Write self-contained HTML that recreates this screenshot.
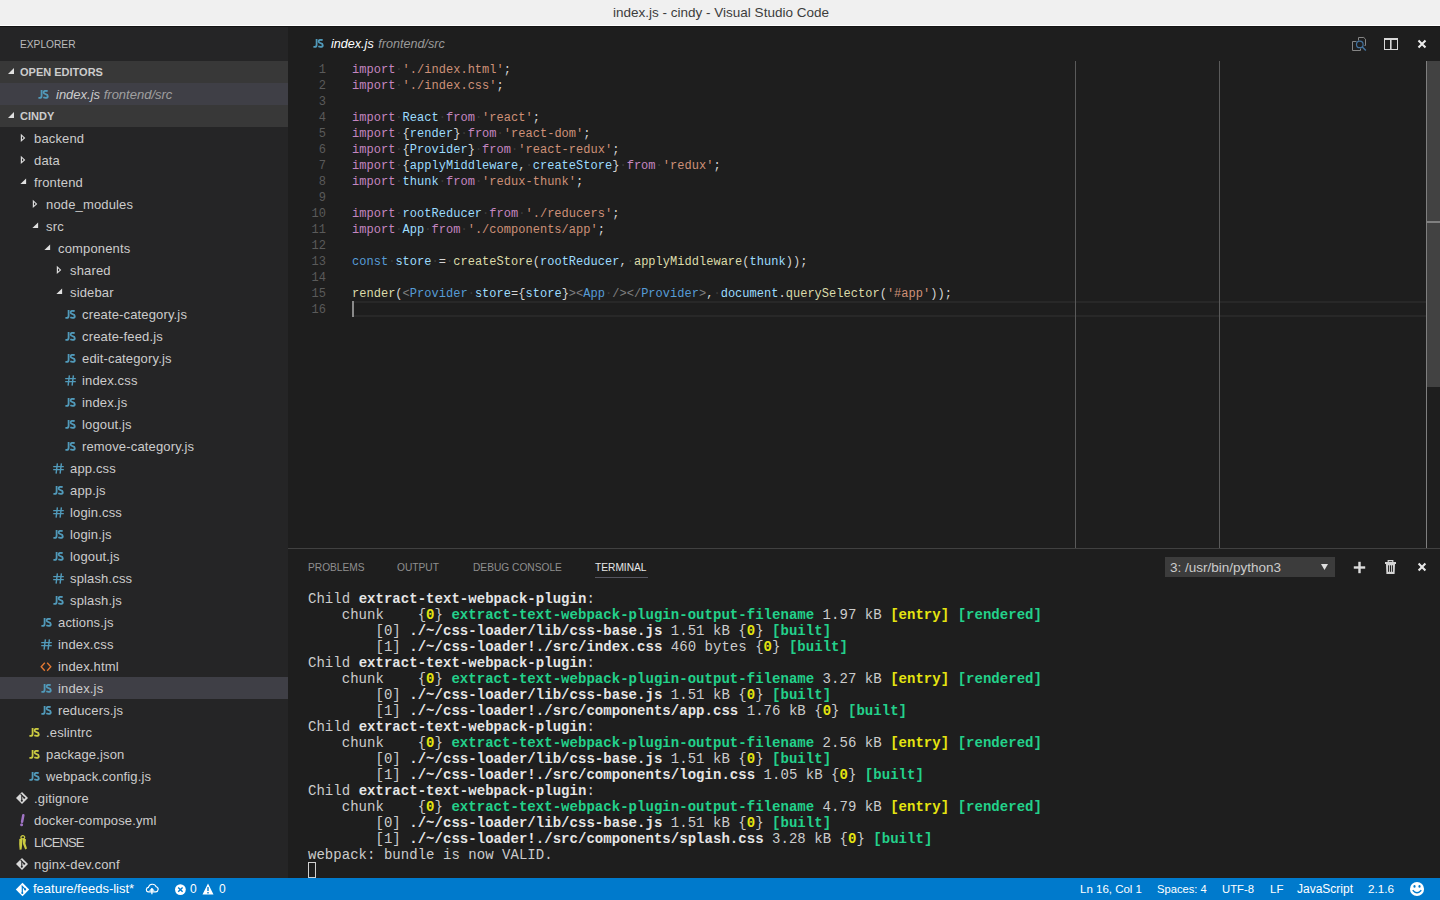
<!DOCTYPE html>
<html><head><meta charset="utf-8"><style>
*{margin:0;padding:0;box-sizing:border-box}
html,body{width:1440px;height:900px;overflow:hidden;background:#1e1e1e}
body{position:relative;font-family:"Liberation Sans",sans-serif}
.abs{position:absolute}
#title{position:absolute;left:0;top:0;width:1440px;height:25px;background:#f0f0f0}
#title .tx{position:absolute;left:1px;width:1440px;top:5px;text-align:center;font-size:13.5px;color:#3c3c3c;line-height:16px}
#tl1{position:absolute;left:0;top:25px;width:1440px;height:1px;background:#ffffff}
#tl2{position:absolute;left:0;top:26px;width:1440px;height:1px;background:#141414}
#side{position:absolute;left:0;top:27px;width:288px;height:851px;background:#252526;overflow:hidden}
#side .hdr{position:absolute;left:0;width:288px;height:22px;background:#383838}
#side .htx{position:absolute;left:20px;font-size:11px;font-weight:bold;color:#cccccc;line-height:22px}
.sel{position:absolute;left:0;width:288px;height:22px;background:#3f3f46}
.ti{position:absolute;font-size:13px;color:#cccccc;line-height:22px;white-space:pre;padding-top:0.5px;letter-spacing:0.15px}
.ic{position:absolute}
.jsic{position:absolute;font-size:10px;font-weight:bold;line-height:22px;letter-spacing:-0.5px}
.hashic{position:absolute;font-size:13px;font-weight:bold;line-height:22px;color:#519aba}
.ymlic{position:absolute;left:0;font-size:14px;font-weight:bold;font-style:italic;line-height:22px;color:#a074c4}
#editor{position:absolute;left:288px;top:27px;width:1152px;height:851px;background:#1e1e1e}
.ln{position:absolute;left:288px;width:38px;text-align:right;font-family:"Liberation Mono",monospace;font-size:12px;line-height:16px;color:#5a5a5a;height:16px}
.cl{position:absolute;left:352px;font-family:"Liberation Mono",monospace;font-size:12px;letter-spacing:0.025px;line-height:16px;white-space:pre;height:16px}
.ws{color:#3b3b3b}
.tl{position:absolute;left:308px;font-family:"Liberation Mono",monospace;font-size:14px;letter-spacing:0.035px;line-height:16px;white-space:pre;color:#cccccc;height:16px}
.tl .b{font-weight:bold;color:#e5e5e5}
.tl .by{font-weight:bold;color:#e5e510}
.tl .bg{font-weight:bold;color:#23d18b}
.tl .g{font-weight:bold;color:#23d18b}
#status{position:absolute;left:0;top:878px;width:1440px;height:22px;background:#007acc;color:#ffffff;font-size:12px}
#status .it{position:absolute;top:0;line-height:22px;white-space:pre}
.ptab{position:absolute;top:560px;font-size:10.2px;line-height:16px;color:#8f8f8f}
</style></head><body>
<div id="title"><div class="tx">index.js - cindy - Visual Studio Code</div></div>
<div id="tl1"></div><div id="tl2"></div>
<div id="editor"></div>

<div id="side">
 <div class="abs" style="left:20px;top:10px;font-size:10.2px;color:#bbbbbb;line-height:16px">EXPLORER</div>
 <div class="hdr" style="top:34px"></div>
 <svg class="ic" style="left:8px;top:41px" width="8" height="8"><path d="M0 6 L6 6 L6 0 Z" fill="#e0e0e0"/></svg>
 <div class="htx" style="top:34px">OPEN EDITORS</div>
 <div class="sel" style="top:56px"></div>
 <svg class="ic" style="left:38px;top:63px" width="13" height="11"><path d="M3.6 0 V5.9 Q3.6 7.9 1.6 7.9 H0.4" fill="none" stroke="#519aba" stroke-width="1.8"/><path d="M9.7 1.3 Q8.7 0.8 7.7 0.8 Q5.6 0.8 5.6 2.5 Q5.6 3.7 7.5 4.2 Q9.8 4.8 9.8 6.2 Q9.8 7.9 7.6 7.9 Q6.4 7.9 5.3 7.3" fill="none" stroke="#519aba" stroke-width="1.8"/></svg>
 <div class="ti" style="top:56px;left:56px;font-style:italic;letter-spacing:0">index.js <span style="color:#a0a0a0">frontend/src</span></div>
 <div class="hdr" style="top:78px"></div>
 <svg class="ic" style="left:8px;top:85px" width="8" height="8"><path d="M0 6 L6 6 L6 0 Z" fill="#e0e0e0"/></svg>
 <div class="htx" style="top:78px">CINDY</div>
</div>

<div id="treewrap" style="position:absolute;left:0;top:0"><svg class="ic" style="left:20px;top:133px" width="8" height="11"><path d="M0.8 0.7 L5.3 4.9 L0.8 9.1 Z M2 3.2 L2 6.6 L3.7 4.9 Z" fill="#dcdcdc" fill-rule="evenodd"/></svg>
<div class="ti" style="top:127px;left:34px">backend</div>
<svg class="ic" style="left:20px;top:155px" width="8" height="11"><path d="M0.8 0.7 L5.3 4.9 L0.8 9.1 Z M2 3.2 L2 6.6 L3.7 4.9 Z" fill="#dcdcdc" fill-rule="evenodd"/></svg>
<div class="ti" style="top:149px;left:34px">data</div>
<svg class="ic" style="left:20px;top:178px" width="8" height="8"><path d="M0.4 6 L6.1 6 L6.1 0.4 Z" fill="#e0e0e0"/></svg>
<div class="ti" style="top:171px;left:34px">frontend</div>
<svg class="ic" style="left:32px;top:199px" width="8" height="11"><path d="M0.8 0.7 L5.3 4.9 L0.8 9.1 Z M2 3.2 L2 6.6 L3.7 4.9 Z" fill="#dcdcdc" fill-rule="evenodd"/></svg>
<div class="ti" style="top:193px;left:46px">node_modules</div>
<svg class="ic" style="left:32px;top:222px" width="8" height="8"><path d="M0.4 6 L6.1 6 L6.1 0.4 Z" fill="#e0e0e0"/></svg>
<div class="ti" style="top:215px;left:46px">src</div>
<svg class="ic" style="left:44px;top:244px" width="8" height="8"><path d="M0.4 6 L6.1 6 L6.1 0.4 Z" fill="#e0e0e0"/></svg>
<div class="ti" style="top:237px;left:58px">components</div>
<svg class="ic" style="left:56px;top:265px" width="8" height="11"><path d="M0.8 0.7 L5.3 4.9 L0.8 9.1 Z M2 3.2 L2 6.6 L3.7 4.9 Z" fill="#dcdcdc" fill-rule="evenodd"/></svg>
<div class="ti" style="top:259px;left:70px">shared</div>
<svg class="ic" style="left:56px;top:288px" width="8" height="8"><path d="M0.4 6 L6.1 6 L6.1 0.4 Z" fill="#e0e0e0"/></svg>
<div class="ti" style="top:281px;left:70px">sidebar</div>
<svg class="ic" style="left:65px;top:310px" width="13" height="11"><path d="M3.6 0 V5.9 Q3.6 7.9 1.6 7.9 H0.4" fill="none" stroke="#519aba" stroke-width="1.8"/><path d="M9.7 1.3 Q8.7 0.8 7.7 0.8 Q5.6 0.8 5.6 2.5 Q5.6 3.7 7.5 4.2 Q9.8 4.8 9.8 6.2 Q9.8 7.9 7.6 7.9 Q6.4 7.9 5.3 7.3" fill="none" stroke="#519aba" stroke-width="1.8"/></svg>
<div class="ti" style="top:303px;left:82px">create-category.js</div>
<svg class="ic" style="left:65px;top:332px" width="13" height="11"><path d="M3.6 0 V5.9 Q3.6 7.9 1.6 7.9 H0.4" fill="none" stroke="#519aba" stroke-width="1.8"/><path d="M9.7 1.3 Q8.7 0.8 7.7 0.8 Q5.6 0.8 5.6 2.5 Q5.6 3.7 7.5 4.2 Q9.8 4.8 9.8 6.2 Q9.8 7.9 7.6 7.9 Q6.4 7.9 5.3 7.3" fill="none" stroke="#519aba" stroke-width="1.8"/></svg>
<div class="ti" style="top:325px;left:82px">create-feed.js</div>
<svg class="ic" style="left:65px;top:354px" width="13" height="11"><path d="M3.6 0 V5.9 Q3.6 7.9 1.6 7.9 H0.4" fill="none" stroke="#519aba" stroke-width="1.8"/><path d="M9.7 1.3 Q8.7 0.8 7.7 0.8 Q5.6 0.8 5.6 2.5 Q5.6 3.7 7.5 4.2 Q9.8 4.8 9.8 6.2 Q9.8 7.9 7.6 7.9 Q6.4 7.9 5.3 7.3" fill="none" stroke="#519aba" stroke-width="1.8"/></svg>
<div class="ti" style="top:347px;left:82px">edit-category.js</div>
<svg class="ic" style="left:65px;top:375px" width="11" height="11"><path d="M4.4 0.3 L3.1 10.7 M8.4 0.3 L7.1 10.7 M0.2 3.6 H10.8 M0.2 6.6 H10.8" fill="none" stroke="#519aba" stroke-width="1.4"/></svg>
<div class="ti" style="top:369px;left:82px">index.css</div>
<svg class="ic" style="left:65px;top:398px" width="13" height="11"><path d="M3.6 0 V5.9 Q3.6 7.9 1.6 7.9 H0.4" fill="none" stroke="#519aba" stroke-width="1.8"/><path d="M9.7 1.3 Q8.7 0.8 7.7 0.8 Q5.6 0.8 5.6 2.5 Q5.6 3.7 7.5 4.2 Q9.8 4.8 9.8 6.2 Q9.8 7.9 7.6 7.9 Q6.4 7.9 5.3 7.3" fill="none" stroke="#519aba" stroke-width="1.8"/></svg>
<div class="ti" style="top:391px;left:82px">index.js</div>
<svg class="ic" style="left:65px;top:420px" width="13" height="11"><path d="M3.6 0 V5.9 Q3.6 7.9 1.6 7.9 H0.4" fill="none" stroke="#519aba" stroke-width="1.8"/><path d="M9.7 1.3 Q8.7 0.8 7.7 0.8 Q5.6 0.8 5.6 2.5 Q5.6 3.7 7.5 4.2 Q9.8 4.8 9.8 6.2 Q9.8 7.9 7.6 7.9 Q6.4 7.9 5.3 7.3" fill="none" stroke="#519aba" stroke-width="1.8"/></svg>
<div class="ti" style="top:413px;left:82px">logout.js</div>
<svg class="ic" style="left:65px;top:442px" width="13" height="11"><path d="M3.6 0 V5.9 Q3.6 7.9 1.6 7.9 H0.4" fill="none" stroke="#519aba" stroke-width="1.8"/><path d="M9.7 1.3 Q8.7 0.8 7.7 0.8 Q5.6 0.8 5.6 2.5 Q5.6 3.7 7.5 4.2 Q9.8 4.8 9.8 6.2 Q9.8 7.9 7.6 7.9 Q6.4 7.9 5.3 7.3" fill="none" stroke="#519aba" stroke-width="1.8"/></svg>
<div class="ti" style="top:435px;left:82px">remove-category.js</div>
<svg class="ic" style="left:53px;top:463px" width="11" height="11"><path d="M4.4 0.3 L3.1 10.7 M8.4 0.3 L7.1 10.7 M0.2 3.6 H10.8 M0.2 6.6 H10.8" fill="none" stroke="#519aba" stroke-width="1.4"/></svg>
<div class="ti" style="top:457px;left:70px">app.css</div>
<svg class="ic" style="left:53px;top:486px" width="13" height="11"><path d="M3.6 0 V5.9 Q3.6 7.9 1.6 7.9 H0.4" fill="none" stroke="#519aba" stroke-width="1.8"/><path d="M9.7 1.3 Q8.7 0.8 7.7 0.8 Q5.6 0.8 5.6 2.5 Q5.6 3.7 7.5 4.2 Q9.8 4.8 9.8 6.2 Q9.8 7.9 7.6 7.9 Q6.4 7.9 5.3 7.3" fill="none" stroke="#519aba" stroke-width="1.8"/></svg>
<div class="ti" style="top:479px;left:70px">app.js</div>
<svg class="ic" style="left:53px;top:507px" width="11" height="11"><path d="M4.4 0.3 L3.1 10.7 M8.4 0.3 L7.1 10.7 M0.2 3.6 H10.8 M0.2 6.6 H10.8" fill="none" stroke="#519aba" stroke-width="1.4"/></svg>
<div class="ti" style="top:501px;left:70px">login.css</div>
<svg class="ic" style="left:53px;top:530px" width="13" height="11"><path d="M3.6 0 V5.9 Q3.6 7.9 1.6 7.9 H0.4" fill="none" stroke="#519aba" stroke-width="1.8"/><path d="M9.7 1.3 Q8.7 0.8 7.7 0.8 Q5.6 0.8 5.6 2.5 Q5.6 3.7 7.5 4.2 Q9.8 4.8 9.8 6.2 Q9.8 7.9 7.6 7.9 Q6.4 7.9 5.3 7.3" fill="none" stroke="#519aba" stroke-width="1.8"/></svg>
<div class="ti" style="top:523px;left:70px">login.js</div>
<svg class="ic" style="left:53px;top:552px" width="13" height="11"><path d="M3.6 0 V5.9 Q3.6 7.9 1.6 7.9 H0.4" fill="none" stroke="#519aba" stroke-width="1.8"/><path d="M9.7 1.3 Q8.7 0.8 7.7 0.8 Q5.6 0.8 5.6 2.5 Q5.6 3.7 7.5 4.2 Q9.8 4.8 9.8 6.2 Q9.8 7.9 7.6 7.9 Q6.4 7.9 5.3 7.3" fill="none" stroke="#519aba" stroke-width="1.8"/></svg>
<div class="ti" style="top:545px;left:70px">logout.js</div>
<svg class="ic" style="left:53px;top:573px" width="11" height="11"><path d="M4.4 0.3 L3.1 10.7 M8.4 0.3 L7.1 10.7 M0.2 3.6 H10.8 M0.2 6.6 H10.8" fill="none" stroke="#519aba" stroke-width="1.4"/></svg>
<div class="ti" style="top:567px;left:70px">splash.css</div>
<svg class="ic" style="left:53px;top:596px" width="13" height="11"><path d="M3.6 0 V5.9 Q3.6 7.9 1.6 7.9 H0.4" fill="none" stroke="#519aba" stroke-width="1.8"/><path d="M9.7 1.3 Q8.7 0.8 7.7 0.8 Q5.6 0.8 5.6 2.5 Q5.6 3.7 7.5 4.2 Q9.8 4.8 9.8 6.2 Q9.8 7.9 7.6 7.9 Q6.4 7.9 5.3 7.3" fill="none" stroke="#519aba" stroke-width="1.8"/></svg>
<div class="ti" style="top:589px;left:70px">splash.js</div>
<svg class="ic" style="left:41px;top:618px" width="13" height="11"><path d="M3.6 0 V5.9 Q3.6 7.9 1.6 7.9 H0.4" fill="none" stroke="#519aba" stroke-width="1.8"/><path d="M9.7 1.3 Q8.7 0.8 7.7 0.8 Q5.6 0.8 5.6 2.5 Q5.6 3.7 7.5 4.2 Q9.8 4.8 9.8 6.2 Q9.8 7.9 7.6 7.9 Q6.4 7.9 5.3 7.3" fill="none" stroke="#519aba" stroke-width="1.8"/></svg>
<div class="ti" style="top:611px;left:58px">actions.js</div>
<svg class="ic" style="left:41px;top:639px" width="11" height="11"><path d="M4.4 0.3 L3.1 10.7 M8.4 0.3 L7.1 10.7 M0.2 3.6 H10.8 M0.2 6.6 H10.8" fill="none" stroke="#519aba" stroke-width="1.4"/></svg>
<div class="ti" style="top:633px;left:58px">index.css</div>
<svg class="ic" style="left:40px;top:662px" width="12" height="10"><path d="M4.8 0.8 L1.2 4.8 L4.8 8.8 M7.2 0.8 L10.8 4.8 L7.2 8.8" fill="none" stroke="#e37933" stroke-width="1.35"/></svg>
<div class="ti" style="top:655px;left:58px">index.html</div>
<div class="sel" style="top:677px"></div>
<svg class="ic" style="left:41px;top:684px" width="13" height="11"><path d="M3.6 0 V5.9 Q3.6 7.9 1.6 7.9 H0.4" fill="none" stroke="#519aba" stroke-width="1.8"/><path d="M9.7 1.3 Q8.7 0.8 7.7 0.8 Q5.6 0.8 5.6 2.5 Q5.6 3.7 7.5 4.2 Q9.8 4.8 9.8 6.2 Q9.8 7.9 7.6 7.9 Q6.4 7.9 5.3 7.3" fill="none" stroke="#519aba" stroke-width="1.8"/></svg>
<div class="ti" style="top:677px;left:58px">index.js</div>
<svg class="ic" style="left:41px;top:706px" width="13" height="11"><path d="M3.6 0 V5.9 Q3.6 7.9 1.6 7.9 H0.4" fill="none" stroke="#519aba" stroke-width="1.8"/><path d="M9.7 1.3 Q8.7 0.8 7.7 0.8 Q5.6 0.8 5.6 2.5 Q5.6 3.7 7.5 4.2 Q9.8 4.8 9.8 6.2 Q9.8 7.9 7.6 7.9 Q6.4 7.9 5.3 7.3" fill="none" stroke="#519aba" stroke-width="1.8"/></svg>
<div class="ti" style="top:699px;left:58px">reducers.js</div>
<svg class="ic" style="left:29px;top:728px" width="13" height="11"><path d="M3.6 0 V5.9 Q3.6 7.9 1.6 7.9 H0.4" fill="none" stroke="#cbcb41" stroke-width="1.8"/><path d="M9.7 1.3 Q8.7 0.8 7.7 0.8 Q5.6 0.8 5.6 2.5 Q5.6 3.7 7.5 4.2 Q9.8 4.8 9.8 6.2 Q9.8 7.9 7.6 7.9 Q6.4 7.9 5.3 7.3" fill="none" stroke="#cbcb41" stroke-width="1.8"/></svg>
<div class="ti" style="top:721px;left:46px">.eslintrc</div>
<svg class="ic" style="left:29px;top:750px" width="13" height="11"><path d="M3.6 0 V5.9 Q3.6 7.9 1.6 7.9 H0.4" fill="none" stroke="#cbcb41" stroke-width="1.8"/><path d="M9.7 1.3 Q8.7 0.8 7.7 0.8 Q5.6 0.8 5.6 2.5 Q5.6 3.7 7.5 4.2 Q9.8 4.8 9.8 6.2 Q9.8 7.9 7.6 7.9 Q6.4 7.9 5.3 7.3" fill="none" stroke="#cbcb41" stroke-width="1.8"/></svg>
<div class="ti" style="top:743px;left:46px">package.json</div>
<svg class="ic" style="left:29px;top:772px" width="13" height="11"><path d="M3.6 0 V5.9 Q3.6 7.9 1.6 7.9 H0.4" fill="none" stroke="#519aba" stroke-width="1.8"/><path d="M9.7 1.3 Q8.7 0.8 7.7 0.8 Q5.6 0.8 5.6 2.5 Q5.6 3.7 7.5 4.2 Q9.8 4.8 9.8 6.2 Q9.8 7.9 7.6 7.9 Q6.4 7.9 5.3 7.3" fill="none" stroke="#519aba" stroke-width="1.8"/></svg>
<div class="ti" style="top:765px;left:46px">webpack.config.js</div>
<svg class="ic" style="left:16px;top:792px" width="13" height="13"><path d="M6 0 L12 6 L6 12 L0 6 Z" fill="#d8d8d8"/><path d="M4.6 1.8 L8.2 5.6 M5.8 3.2 V8.7" stroke="#252526" stroke-width="1.1"/><circle cx="5.8" cy="8.7" r="1.05" fill="#252526"/><circle cx="8.3" cy="5.7" r="1.05" fill="#252526"/></svg>
<div class="ti" style="top:787px;left:34px">.gitignore</div>
<svg class="ic" style="left:18px;top:814px" width="8" height="14"><path d="M5.3 1.3 L4.1 7.8" stroke="#a074c4" stroke-width="2.5" stroke-linecap="round"/><circle cx="3.6" cy="10.7" r="1.5" fill="#a074c4"/></svg>
<div class="ti" style="top:809px;left:34px">docker-compose.yml</div>
<svg class="ic" style="left:18px;top:835px" width="10" height="16"><ellipse cx="4.8" cy="2.3" rx="1.9" ry="1.6" fill="none" stroke="#cbcb41" stroke-width="1.3"/><path d="M1.3 4 Q3 3.2 4.6 4 L4.2 9 L3.6 14.5 L1.6 14.8 L1.2 9 Z" fill="#cbcb41"/><path d="M4.8 4 Q6.6 3.2 8 4.2 L7.4 8.5 L9 13.6 L7.2 14.4 L5 9 Z" fill="#cbcb41"/></svg>
<div class="ti" style="top:831px;left:34px;letter-spacing:-0.85px">LICENSE</div>
<svg class="ic" style="left:16px;top:858px" width="13" height="13"><path d="M6 0 L12 6 L6 12 L0 6 Z" fill="#d8d8d8"/><path d="M4.6 1.8 L8.2 5.6 M5.8 3.2 V8.7" stroke="#252526" stroke-width="1.1"/><circle cx="5.8" cy="8.7" r="1.05" fill="#252526"/><circle cx="8.3" cy="5.7" r="1.05" fill="#252526"/></svg>
<div class="ti" style="top:853px;left:34px">nginx-dev.conf</div></div>
<!-- editor title -->
<svg class="ic" style="left:313px;top:39px" width="13" height="11"><path d="M3.6 0 V5.9 Q3.6 7.9 1.6 7.9 H0.4" fill="none" stroke="#519aba" stroke-width="1.8"/><path d="M9.7 1.3 Q8.7 0.8 7.7 0.8 Q5.6 0.8 5.6 2.5 Q5.6 3.7 7.5 4.2 Q9.8 4.8 9.8 6.2 Q9.8 7.9 7.6 7.9 Q6.4 7.9 5.3 7.3" fill="none" stroke="#519aba" stroke-width="1.8"/></svg>
<div class="abs" style="left:331px;top:33px;font-size:12.6px;line-height:22px;font-style:italic;color:#ffffff;white-space:pre;word-spacing:1px">index.js <span style="color:#9a9a9a">frontend/src</span></div>
<!-- editor title actions -->
<svg class="ic" style="left:1351px;top:36px" width="17" height="17"><path d="M5.5 5.5 H1.5 V14.5 H9.5 V12.5" fill="none" stroke="#858585" stroke-width="1"/><path d="M7.5 4.5 V1.5 H12.8 L14.5 3.2 V9.5 H13.5" fill="none" stroke="#858585" stroke-width="1"/><circle cx="8.8" cy="8.4" r="3.3" fill="#1e1e1e" stroke="#44739f" stroke-width="1.2"/><path d="M11.1 10.8 L14.8 14.5" stroke="#44739f" stroke-width="1.5"/></svg>
<svg class="ic" style="left:1383px;top:37px" width="16" height="14"><rect x="1.5" y="1.5" width="13" height="11" fill="none" stroke="#d8d8d8" stroke-width="1"/><rect x="1" y="1" width="14" height="2" fill="#d8d8d8"/><rect x="7" y="2" width="1.6" height="11" fill="#d8d8d8"/></svg>
<svg class="ic" style="left:1416px;top:38px" width="12" height="12"><path d="M2.5 2.5 L9.5 9.5 M9.5 2.5 L2.5 9.5" stroke="#ececec" stroke-width="2.1"/></svg>
<!-- code -->
<div class="abs" style="left:352px;top:301px;width:1074px;height:16px;border-top:2px solid #282828;border-bottom:2px solid #282828"></div>
<div class="ln" style="top:62px">1</div>
<div class="cl" style="top:62px"><span style="color:#c586c0">import</span><span class="ws">·</span><span style="color:#ce9178">&#x27;./index.html&#x27;</span><span style="color:#d4d4d4">;</span></div>
<div class="ln" style="top:78px">2</div>
<div class="cl" style="top:78px"><span style="color:#c586c0">import</span><span class="ws">·</span><span style="color:#ce9178">&#x27;./index.css&#x27;</span><span style="color:#d4d4d4">;</span></div>
<div class="ln" style="top:94px">3</div>
<div class="cl" style="top:94px"></div>
<div class="ln" style="top:110px">4</div>
<div class="cl" style="top:110px"><span style="color:#c586c0">import</span><span class="ws">·</span><span style="color:#9cdcfe">React</span><span class="ws">·</span><span style="color:#c586c0">from</span><span class="ws">·</span><span style="color:#ce9178">&#x27;react&#x27;</span><span style="color:#d4d4d4">;</span></div>
<div class="ln" style="top:126px">5</div>
<div class="cl" style="top:126px"><span style="color:#c586c0">import</span><span class="ws">·</span><span style="color:#d4d4d4">{</span><span style="color:#9cdcfe">render</span><span style="color:#d4d4d4">}</span><span class="ws">·</span><span style="color:#c586c0">from</span><span class="ws">·</span><span style="color:#ce9178">&#x27;react-dom&#x27;</span><span style="color:#d4d4d4">;</span></div>
<div class="ln" style="top:142px">6</div>
<div class="cl" style="top:142px"><span style="color:#c586c0">import</span><span class="ws">·</span><span style="color:#d4d4d4">{</span><span style="color:#9cdcfe">Provider</span><span style="color:#d4d4d4">}</span><span class="ws">·</span><span style="color:#c586c0">from</span><span class="ws">·</span><span style="color:#ce9178">&#x27;react-redux&#x27;</span><span style="color:#d4d4d4">;</span></div>
<div class="ln" style="top:158px">7</div>
<div class="cl" style="top:158px"><span style="color:#c586c0">import</span><span class="ws">·</span><span style="color:#d4d4d4">{</span><span style="color:#9cdcfe">applyMiddleware</span><span style="color:#d4d4d4">,</span><span class="ws">·</span><span style="color:#9cdcfe">createStore</span><span style="color:#d4d4d4">}</span><span class="ws">·</span><span style="color:#c586c0">from</span><span class="ws">·</span><span style="color:#ce9178">&#x27;redux&#x27;</span><span style="color:#d4d4d4">;</span></div>
<div class="ln" style="top:174px">8</div>
<div class="cl" style="top:174px"><span style="color:#c586c0">import</span><span class="ws">·</span><span style="color:#9cdcfe">thunk</span><span class="ws">·</span><span style="color:#c586c0">from</span><span class="ws">·</span><span style="color:#ce9178">&#x27;redux-thunk&#x27;</span><span style="color:#d4d4d4">;</span></div>
<div class="ln" style="top:190px">9</div>
<div class="cl" style="top:190px"></div>
<div class="ln" style="top:206px">10</div>
<div class="cl" style="top:206px"><span style="color:#c586c0">import</span><span class="ws">·</span><span style="color:#9cdcfe">rootReducer</span><span class="ws">·</span><span style="color:#c586c0">from</span><span class="ws">·</span><span style="color:#ce9178">&#x27;./reducers&#x27;</span><span style="color:#d4d4d4">;</span></div>
<div class="ln" style="top:222px">11</div>
<div class="cl" style="top:222px"><span style="color:#c586c0">import</span><span class="ws">·</span><span style="color:#9cdcfe">App</span><span class="ws">·</span><span style="color:#c586c0">from</span><span class="ws">·</span><span style="color:#ce9178">&#x27;./components/app&#x27;</span><span style="color:#d4d4d4">;</span></div>
<div class="ln" style="top:238px">12</div>
<div class="cl" style="top:238px"></div>
<div class="ln" style="top:254px">13</div>
<div class="cl" style="top:254px"><span style="color:#569cd6">const</span><span class="ws">·</span><span style="color:#9cdcfe">store</span><span class="ws">·</span><span style="color:#d4d4d4">=</span><span class="ws">·</span><span style="color:#dcdcaa">createStore</span><span style="color:#d4d4d4">(</span><span style="color:#9cdcfe">rootReducer</span><span style="color:#d4d4d4">,</span><span class="ws">·</span><span style="color:#dcdcaa">applyMiddleware</span><span style="color:#d4d4d4">(</span><span style="color:#9cdcfe">thunk</span><span style="color:#d4d4d4">));</span></div>
<div class="ln" style="top:270px">14</div>
<div class="cl" style="top:270px"></div>
<div class="ln" style="top:286px">15</div>
<div class="cl" style="top:286px"><span style="color:#dcdcaa">render</span><span style="color:#d4d4d4">(</span><span style="color:#808080">&lt;</span><span style="color:#569cd6">Provider</span><span class="ws">·</span><span style="color:#9cdcfe">store</span><span style="color:#d4d4d4">=</span><span style="color:#d4d4d4">{</span><span style="color:#9cdcfe">store</span><span style="color:#d4d4d4">}</span><span style="color:#808080">&gt;&lt;</span><span style="color:#569cd6">App</span><span class="ws">·</span><span style="color:#808080">/&gt;&lt;/</span><span style="color:#569cd6">Provider</span><span style="color:#808080">&gt;</span><span style="color:#d4d4d4">,</span><span class="ws">·</span><span style="color:#9cdcfe">document</span><span style="color:#d4d4d4">.</span><span style="color:#dcdcaa">querySelector</span><span style="color:#d4d4d4">(</span><span style="color:#ce9178">&#x27;#app&#x27;</span><span style="color:#d4d4d4">));</span></div>
<div class="ln" style="top:302px">16</div>
<div class="cl" style="top:302px"></div>
<div class="abs" style="left:352px;top:301px;width:2px;height:16px;background:#8a8a8a"></div>
<div class="abs" style="left:1075px;top:61px;width:1px;height:487px;background:#5a5a5a"></div>
<div class="abs" style="left:1219px;top:61px;width:1px;height:487px;background:#5a5a5a"></div>
<!-- scrollbar -->
<div class="abs" style="left:1426px;top:61px;width:1px;height:487px;background:#7f7f7f"></div>
<div class="abs" style="left:1427px;top:61px;width:13px;height:326px;background:#424242"></div>
<div class="abs" style="left:1427px;top:221px;width:13px;height:2px;background:#808080"></div>
<!-- panel -->
<div class="abs" style="left:288px;top:548px;width:1152px;height:1px;background:#414141"></div>
<div class="ptab" style="left:308px">PROBLEMS</div>
<div class="ptab" style="left:397px">OUTPUT</div>
<div class="ptab" style="left:473px">DEBUG CONSOLE</div>
<div class="ptab" style="left:595px;color:#e7e7e7">TERMINAL</div>
<div class="abs" style="left:595px;top:577px;width:53px;height:1px;background:#55555f"></div>
<div class="abs" style="left:1165px;top:557px;width:170px;height:20px;background:#3c3c3c"></div>
<div class="abs" style="left:1170px;top:558px;font-size:13.5px;line-height:20px;color:#cccccc;white-space:pre">3: /usr/bin/python3</div>
<svg class="ic" style="left:1321px;top:563px" width="8" height="8"><path d="M0 1 L7 1 L3.5 7 Z" fill="#e0e0e0"/></svg>
<svg class="ic" style="left:1353px;top:561px" width="13" height="13"><rect x="0.8" y="5.3" width="11.4" height="2.4" fill="#dcdcdc"/><rect x="5.3" y="0.8" width="2.4" height="11.4" fill="#dcdcdc"/></svg>
<svg class="ic" style="left:1384px;top:559px" width="13" height="16"><path d="M4.2 3.2 V1.6 H8.8 V3.2" fill="none" stroke="#d4d4d4" stroke-width="1.2"/><rect x="1" y="3" width="11" height="2" fill="#d4d4d4"/><path d="M2 5 H11 L10.6 15 H2.4 Z" fill="#d4d4d4"/><rect x="4.1" y="6.3" width="1" height="6.5" fill="#1e1e1e"/><rect x="6" y="6.3" width="1" height="6.5" fill="#1e1e1e"/><rect x="7.9" y="6.3" width="1" height="6.5" fill="#1e1e1e"/></svg>
<svg class="ic" style="left:1416px;top:561px" width="12" height="12"><path d="M2.6 2.6 L9.4 9.4 M9.4 2.6 L2.6 9.4" stroke="#e8e8e8" stroke-width="2.1"/></svg>
<div class="tl" style="top:591px">Child <span class="b">extract-text-webpack-plugin</span>:</div>
<div class="tl" style="top:607px">    chunk    {<span class="by">0</span>} <span class="bg">extract-text-webpack-plugin-output-filename</span> 1.97 kB <span class="by">[entry]</span> <span class="g">[rendered]</span></div>
<div class="tl" style="top:623px">        [0] <span class="b">./~/css-loader/lib/css-base.js</span> 1.51 kB {<span class="by">0</span>} <span class="bg">[built]</span></div>
<div class="tl" style="top:639px">        [1] <span class="b">./~/css-loader!./src/index.css</span> 460 bytes {<span class="by">0</span>} <span class="bg">[built]</span></div>
<div class="tl" style="top:655px">Child <span class="b">extract-text-webpack-plugin</span>:</div>
<div class="tl" style="top:671px">    chunk    {<span class="by">0</span>} <span class="bg">extract-text-webpack-plugin-output-filename</span> 3.27 kB <span class="by">[entry]</span> <span class="g">[rendered]</span></div>
<div class="tl" style="top:687px">        [0] <span class="b">./~/css-loader/lib/css-base.js</span> 1.51 kB {<span class="by">0</span>} <span class="bg">[built]</span></div>
<div class="tl" style="top:703px">        [1] <span class="b">./~/css-loader!./src/components/app.css</span> 1.76 kB {<span class="by">0</span>} <span class="bg">[built]</span></div>
<div class="tl" style="top:719px">Child <span class="b">extract-text-webpack-plugin</span>:</div>
<div class="tl" style="top:735px">    chunk    {<span class="by">0</span>} <span class="bg">extract-text-webpack-plugin-output-filename</span> 2.56 kB <span class="by">[entry]</span> <span class="g">[rendered]</span></div>
<div class="tl" style="top:751px">        [0] <span class="b">./~/css-loader/lib/css-base.js</span> 1.51 kB {<span class="by">0</span>} <span class="bg">[built]</span></div>
<div class="tl" style="top:767px">        [1] <span class="b">./~/css-loader!./src/components/login.css</span> 1.05 kB {<span class="by">0</span>} <span class="bg">[built]</span></div>
<div class="tl" style="top:783px">Child <span class="b">extract-text-webpack-plugin</span>:</div>
<div class="tl" style="top:799px">    chunk    {<span class="by">0</span>} <span class="bg">extract-text-webpack-plugin-output-filename</span> 4.79 kB <span class="by">[entry]</span> <span class="g">[rendered]</span></div>
<div class="tl" style="top:815px">        [0] <span class="b">./~/css-loader/lib/css-base.js</span> 1.51 kB {<span class="by">0</span>} <span class="bg">[built]</span></div>
<div class="tl" style="top:831px">        [1] <span class="b">./~/css-loader!./src/components/splash.css</span> 3.28 kB {<span class="by">0</span>} <span class="bg">[built]</span></div>
<div class="tl" style="top:847px">webpack: bundle is now VALID.</div>
<div class="abs" style="left:308px;top:862px;width:8px;height:16px;border:1px solid #d0d0d0"></div>
<!-- status -->
<div id="status">
 <svg class="ic" style="left:15px;top:4px" width="15" height="15"><path d="M7.5 0.8 L14.2 7.5 L7.5 14.2 L0.8 7.5 Z" fill="#ffffff"/><path d="M6.6 3.6 L10 7.2 M7.3 4.4 V11.2" stroke="#007acc" stroke-width="1.2"/><circle cx="10.1" cy="7.4" r="1.1" fill="#007acc"/><circle cx="7.3" cy="11" r="1" fill="#007acc"/></svg>
 <div class="it" style="left:33px;font-size:13px">feature/feeds-list*</div>
 <svg class="ic" style="left:144px;top:5px" width="16" height="12"><path d="M4 8.9 H11.8 A2.6 2.6 0 0 0 12.2 3.8 A4.1 4.1 0 0 0 4.4 4.4 A2.3 2.3 0 0 0 4 8.9 Z" fill="none" stroke="#fff" stroke-width="1.15"/><path d="M7.9 11.2 V5.3" stroke="#fff" stroke-width="1.3"/><path d="M5.6 7.6 L7.9 5.2 L10.2 7.6 Z" fill="#fff" stroke="#fff" stroke-width="0.5"/></svg>
 <svg class="ic" style="left:175px;top:6px" width="12" height="12"><circle cx="5.4" cy="5.6" r="5.4" fill="#fff"/><path d="M3.2 3.4 L7.6 7.8 M7.6 3.4 L3.2 7.8" stroke="#007acc" stroke-width="1.4"/></svg>
 <div class="it" style="left:190px">0</div>
 <svg class="ic" style="left:202px;top:5px" width="12" height="12"><path d="M6 0.5 L11.5 11.5 H0.5 Z" fill="#fff"/><path d="M6 4 V8 M6 9 V10.5" stroke="#007acc" stroke-width="1.4"/></svg>
 <div class="it" style="left:219px">0</div>
 <div class="it" style="left:1080px;font-size:11.5px">Ln 16, Col 1</div>
 <div class="it" style="left:1157px;font-size:11.2px">Spaces: 4</div>
 <div class="it" style="left:1222px;font-size:11.3px">UTF-8</div>
 <div class="it" style="left:1270px;font-size:11.5px">LF</div>
 <div class="it" style="left:1297px">JavaScript</div>
 <div class="it" style="left:1368px;font-size:11.7px">2.1.6</div>
 <svg class="ic" style="left:1409px;top:3px" width="16" height="16"><circle cx="8" cy="8" r="7.05" fill="#fff"/><ellipse cx="5.5" cy="5.4" rx="1.05" ry="1.45" fill="#007acc"/><ellipse cx="10.5" cy="5.4" rx="1.05" ry="1.45" fill="#007acc"/><path d="M3.7 9.3 Q8 14.2 12.3 9.3" fill="none" stroke="#007acc" stroke-width="1.3"/></svg>
</div>
</body></html>
